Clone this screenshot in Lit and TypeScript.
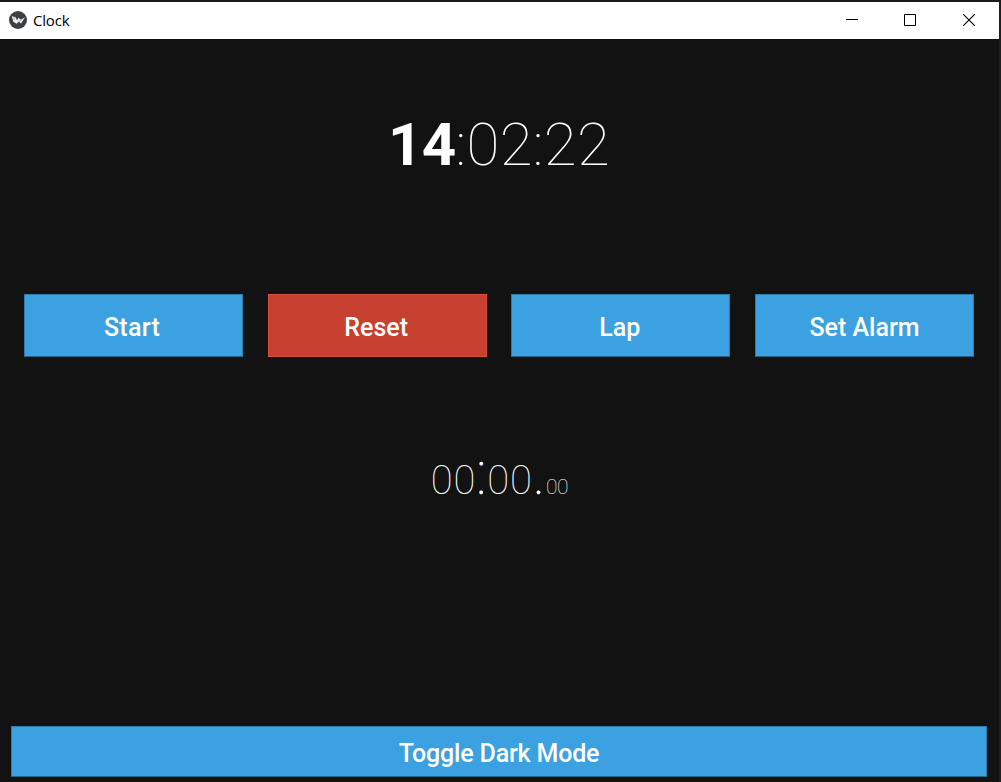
import { LitElement, html, css } from "lit";
import { customElement } from "lit/decorators.js";

@customElement("app-root")
export class AppRoot extends LitElement {
  static styles = css`
    :host {
      display: block;
      width: 1001px;
      height: 782px;
      box-sizing: border-box;
      overflow: hidden;
      background: #121212;
      border-top: 2px solid #1b191a;
      border-right: 2px solid #1e1e1e;
      font-family: Roboto, sans-serif;
      color: #fff;
    }
    .titlebar {
      display: flex;
      height: 37px;
      background: #fff;
      color: #000;
    }
    .brand {
      display: flex;
      align-items: center;
      gap: 6px;
      padding: 0 0 1px 9px;
      flex: 1;
      font: 15px/20px "Open Sans", sans-serif;
    }
    .title { letter-spacing: -0.2px; }
    .controls { display: flex; padding-right: 1px; }
    .control {
      width: 58.5px;
      display: flex;
      justify-content: center;
      padding-top: 12px;
    }
    svg { display: block; }
    .clock {
      display: flex;
      justify-content: center;
      height: 255px;
      padding-top: 71px;
      padding-right: 1px;
      box-sizing: border-box;
      font-size: 60px;
      line-height: 70px;
      font-weight: 100;
      white-space: pre;
    }
    .hour { font-weight: 700; letter-spacing: -0.6px; }
    .minutes { letter-spacing: 0.3px; }
    .buttons {
      display: grid;
      grid-template-columns: repeat(4, 1fr);
      gap: 24.6px;
      padding: 0 25px 0 24px;
    }
    .button {
      box-sizing: border-box;
      display: block;
      width: 100%;
      height: 63px;
      margin: 0;
      padding: 5px 2px 0 0;
      border: 1px solid #2c7cab;
      border-bottom-color: #246389;
      border-radius: 0;
      background: #3ba1e0;
      color: #fff;
      font: 500 25px/30px Roboto, sans-serif;
    }
    .start { letter-spacing: 0.3px; padding-right: 3px; }
    .alarm { padding-right: 0; }
    .reset { background: #c73f2f; border-color: #d84e3b; }
    .stopwatch {
      display: flex;
      justify-content: center;
      align-items: baseline;
      height: 369px;
      padding-top: 81px;
      box-sizing: border-box;
      font-weight: 100;
      font-size: 40px;
      line-height: 70px;
    }
    .digits { letter-spacing: 0.7px; }
    .separator { font-size: 61px; letter-spacing: 0.4px; -webkit-text-stroke: 0.4px #fff; }
    .hundredths { font-size: 21px; letter-spacing: -0.4px; }
    .footer { padding: 0 12px 0 11px; }
    .toggle { height: 51px; letter-spacing: -0.18px; padding: 5px 0 0; }
  `;

  render() {
    return html`
      <header class="titlebar">
        <div class="brand">
          <svg width="18" height="18" viewBox="0 0 18 18">
            <circle cx="9" cy="9" r="9" fill="#3d4043" />
            <path d="M2.8 5 6.8 6.5 8 9.6 9.3 6.8 12 8.7 16 6.2 12 12.6 9.8 10.6 7.6 12.8 4.3 10.8Z" fill="#f1f1f1" />
            <path d="m4.8 6.2.7 3M12 9.2l-2.2 1.4" stroke="#777" stroke-width=".5" />
          </svg>
          <span class="title">Clock</span>
        </div>
        <div class="controls">
          <div class="control"><svg width="12" height="12"><path d="M0 5.5h12" stroke="#000" /></svg></div>
          <div class="control"><svg width="12" height="12"><path d="M.5.5h11v11H.5z" fill="none" stroke="#000" /></svg></div>
          <div class="control"><svg width="12" height="12"><path d="m.3.3 11.4 11.4m0-11.4L.3 11.7" stroke="#000" stroke-width="1.1" /></svg></div>
        </div>
      </header>
      <div class="clock"><span class="hour">14</span><span class="minutes">:02:22</span></div>
      <div class="buttons">
        <button class="button start">Start</button>
        <button class="button reset">Reset</button>
        <button class="button">Lap</button>
        <button class="button alarm">Set Alarm</button>
      </div>
      <div class="stopwatch"><span class="digits">00</span><span class="separator">:</span><span class="digits">00</span><span class="separator">.</span><span class="hundredths">00</span></div>
      <div class="footer"><button class="button toggle">Toggle Dark Mode</button></div>
    `;
  }
}
